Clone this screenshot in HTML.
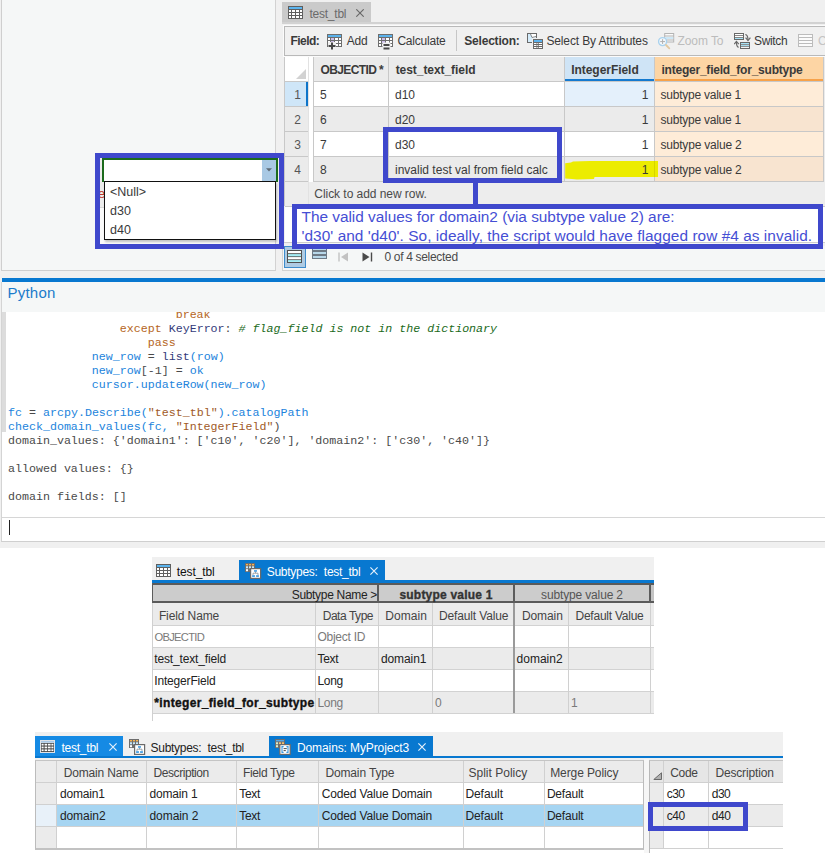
<!DOCTYPE html>
<html>
<head>
<meta charset="utf-8">
<title>ArcGIS Pro domain check</title>
<style>
*{box-sizing:border-box;margin:0;padding:0}
html,body{width:825px;height:853px;overflow:hidden;background:#fff}
body{position:relative;font-family:"Liberation Sans",sans-serif;font-size:12px;color:#333}
.a{position:absolute}
.t{position:absolute;white-space:nowrap;line-height:1}
.b{font-weight:bold}
/* ---------- top: left pane ---------- */
#lp{left:1px;top:0;width:275px;height:271px;background:#f5f7f7;border-left:1px solid #cfcfcf;border-right:1px solid #d2d2d2;border-bottom:1px solid #cfcfcf}
/* ---------- top: table pane ---------- */
#tp{left:276px;top:0;width:549px;height:271px;background:#f0f0f0}

/* table pane pieces */
#tab1{left:282px;top:2px;width:89px;height:20px;background:#cacaca}
#tbar{left:284px;top:26px;width:560px;height:30px;background:#f0f0f0;border:1px solid #b9b9b9;box-shadow:0 0 0 1px #fbfbfb}
#grid{left:284px;top:57px;width:541px;height:149px;background:#fff;border-left:1px solid #c8c8c8}
.hl{position:absolute;height:1px;background:#c8c8c8}
.vl{position:absolute;width:1px;background:#c8c8c8}
.cell{position:absolute}
.g{background:#ebebeb}
.w{background:#fff}
.tx{position:absolute;white-space:nowrap;line-height:14px;height:14px;font-size:12px;color:#3a3a3a}

.ann{position:absolute;border:5px solid #3f48cc}
.anntxt{font-family:"Liberation Sans",sans-serif;font-size:15.4px;line-height:18px;color:#454ed4;white-space:nowrap}
/* python */
#py{left:0;top:0;width:825px;height:548px;background:#f0f0f0}
.code{font-family:"Liberation Mono",monospace;font-size:11.65px;white-space:pre;position:absolute;left:8px;line-height:14px;height:14px}
.k{color:#b5651d}.n{color:#2183dc}.d{color:#333a7a}.c{color:#1a6a1a;font-style:italic}.s{color:#a05a28}.o{color:#4a4a4a}
</style>
</head>
<body>
<div id="py" class="a"></div>
<!-- LEFT PANE -->
<div id="lp" class="a"></div>
<!-- TABLE PANE -->
<div id="tp" class="a"></div>
<div id="tab1" class="a"></div>
<div class="a" style="left:282px;top:22px;width:543px;height:2px;background:#d2d2d2"></div>
<svg class="a" style="left:288px;top:6px" width="15" height="13" viewBox="0 0 15 13"><rect x="0" y="0" width="15" height="13" fill="#5f5f5f"/><rect x="1" y="1" width="13" height="2" fill="#5bb4ee"/><g fill="#fff"><rect x="1" y="4" width="2" height="2"/><rect x="4" y="4" width="3" height="2"/><rect x="8" y="4" width="3" height="2"/><rect x="12" y="4" width="2" height="2"/><rect x="1" y="7" width="2" height="2"/><rect x="4" y="7" width="3" height="2"/><rect x="8" y="7" width="3" height="2"/><rect x="12" y="7" width="2" height="2"/><rect x="1" y="10" width="2" height="2"/><rect x="4" y="10" width="3" height="2"/><rect x="8" y="10" width="3" height="2"/><rect x="12" y="10" width="2" height="2"/></g></svg>
<div class="tx" id="tabtxt" style="left:309.4px;top:7px;font-size:12px;color:#6a6a6a;letter-spacing:-0.225px">test_tbl</div>
<svg class="a" style="left:356px;top:9px" width="8" height="8" viewBox="0 0 8 8"><path d="M0.3 0.3L7.7 7.7M7.7 0.3L0.3 7.7" stroke="#666" stroke-width="1.1" fill="none"/></svg>
<div id="tbar" class="a"></div>
<div class="tx b" id="tb_field" style="left:290.5px;top:34px;letter-spacing:-0.550px">Field:</div>
<div class="tx" id="tb_add" style="left:346.7px;top:34px;letter-spacing:-0.220px">Add</div>
<div class="tx" id="tb_calc" style="left:397.4px;top:34px;letter-spacing:-0.215px">Calculate</div>
<div class="vl" style="left:456px;top:30px;height:21px;background:#c6c6c6"></div>
<div class="tx b" id="tb_sel" style="left:464.2px;top:34px;letter-spacing:-0.186px">Selection:</div>
<div class="tx" id="tb_sba" style="left:546.4px;top:34px;letter-spacing:-0.133px">Select By Attributes</div>
<div class="tx" id="tb_zoom" style="left:677.5px;top:34px;color:#bcbcbc;letter-spacing:-0.081px">Zoom To</div>
<div class="tx" id="tb_sw" style="left:754.0px;top:34px;letter-spacing:-0.341px">Switch</div>
<div class="tx" id="tb_c" style="left:818px;top:34px;color:#c4c4c4">Clear</div>
<svg class="a" style="left:327px;top:34px;overflow:visible" width="15" height="16" viewBox="0 0 15 16"><rect x="0" y="0" width="15" height="13" fill="#6e6e6e"/><rect x="1" y="1" width="13" height="2" fill="#5bb2ec"/><rect x="1" y="4" width="2" height="2" fill="#fff"/><rect x="4" y="4" width="3" height="2" fill="#cdbdea"/><rect x="8" y="4" width="3" height="2" fill="#fff"/><rect x="12" y="4" width="2" height="2" fill="#fff"/><rect x="1" y="7" width="2" height="2" fill="#fff"/><rect x="4" y="7" width="3" height="2" fill="#cdbdea"/><rect x="8" y="7" width="3" height="2" fill="#fff"/><rect x="12" y="7" width="2" height="2" fill="#fff"/><rect x="1" y="10" width="2" height="2" fill="#fff"/><rect x="4" y="10" width="3" height="2" fill="#fff"/><rect x="8" y="10" width="3" height="2" fill="#fff"/><rect x="12" y="10" width="2" height="2" fill="#fff"/><rect x="1" y="8" width="8" height="8" fill="#f0f0f0"/><path d="M5 8.5V15.5M1.5 12H8.5" stroke="#484848" stroke-width="2"/></svg>
<svg class="a" style="left:378px;top:34px;overflow:visible" width="15" height="16" viewBox="0 0 15 16"><rect x="0" y="0" width="15" height="13" fill="#6e6e6e"/><rect x="1" y="1" width="13" height="2" fill="#5bb2ec"/><rect x="1" y="4" width="2" height="2" fill="#fff"/><rect x="4" y="4" width="3" height="2" fill="#cdbdea"/><rect x="8" y="4" width="3" height="2" fill="#fff"/><rect x="12" y="4" width="2" height="2" fill="#fff"/><rect x="1" y="7" width="2" height="2" fill="#fff"/><rect x="4" y="7" width="3" height="2" fill="#cdbdea"/><rect x="8" y="7" width="3" height="2" fill="#fff"/><rect x="12" y="7" width="2" height="2" fill="#fff"/><rect x="1" y="10" width="2" height="2" fill="#fff"/><rect x="4" y="10" width="3" height="2" fill="#fff"/><rect x="8" y="10" width="3" height="2" fill="#fff"/><rect x="12" y="10" width="2" height="2" fill="#fff"/><rect x="4.5" y="8.5" width="8" height="7.5" fill="#f0f0f0"/><path d="M5.5 11H11.5M5.5 14.5H11.5" stroke="#484848" stroke-width="2"/></svg>
<svg class="a" style="left:527px;top:33px" width="17" height="16" viewBox="0 0 17 16"><rect x="0.5" y="0.5" width="9" height="9" fill="#d4ecfb" stroke="#6a6a6a"/><path d="M3.5 1H9V4.2L5.5 5Z" fill="#fff"/><path d="M3.5 1L5 4.5L9 3.5" stroke="#6a6a6a" stroke-width="0.8" fill="none"/><rect x="6" y="6" width="10" height="10" fill="#6a6a6a"/><rect x="5" y="5" width="12" height="1" fill="#f0f0f0"/><rect x="5" y="5" width="1" height="11" fill="#f0f0f0"/><rect x="7" y="7" width="8" height="2" fill="#5bb2ee"/><g fill="#fff"><rect x="7" y="10" width="2.5" height="1"/><rect x="10.3" y="10" width="1" height="1"/><rect x="12" y="10" width="3" height="1"/><rect x="7" y="12" width="2.5" height="1"/><rect x="10.3" y="12" width="1" height="1"/><rect x="12" y="12" width="3" height="1"/><rect x="7" y="14" width="2.5" height="1"/><rect x="10.3" y="14" width="1" height="1"/><rect x="12" y="14" width="3" height="1"/></g></svg>
<svg class="a" style="left:658px;top:33px" width="17" height="17" viewBox="0 0 17 17"><g stroke="#b4b4b4" stroke-width="1" fill="#fafafa"><rect x="6.7" y="0.5" width="9" height="8.5"/></g><path d="M6.7 3H15.7M6.7 7H15.7" stroke="#b4b4b4" stroke-width="1"/><rect x="7.2" y="4" width="8" height="2" fill="#cfe8f6"/><circle cx="4.6" cy="8.6" r="4" fill="#f4f8fb" stroke="#a9d2ee" stroke-width="1.4"/><path d="M2.2 8.6H7M4.6 6.2V11" stroke="#b0b0b0" stroke-width="1"/><path d="M8 12L11.3 15.3" stroke="#e2c9a2" stroke-width="1.8" stroke-linecap="round"/></svg>
<svg class="a" style="left:734px;top:33px" width="17" height="17" viewBox="0 0 17 17"><rect x="0.5" y="0.5" width="9" height="6" fill="#fff" stroke="#686868"/><path d="M0.5 2.5H9.5M0.5 4.5H9.5" stroke="#686868" stroke-width="0.8"/><rect x="1" y="5" width="8" height="1" fill="#a8e4f8"/><rect x="6.5" y="9.5" width="9" height="6" fill="#fff" stroke="#686868"/><rect x="7" y="10" width="8" height="1.2" fill="#a8e4f8"/><rect x="7" y="12" width="8" height="1.2" fill="#a8e4f8"/><path d="M6.5 11.6H15.5M6.5 13.6H15.5" stroke="#686868" stroke-width="0.8"/><path d="M11.3 1.5Q14 2 14 7" stroke="#686868" stroke-width="1.2" fill="none"/><path d="M11.6 4.6L14 7.6L16.4 4.6" stroke="#686868" stroke-width="1.2" fill="none"/><path d="M4.6 14.4Q2.4 13.6 2.4 9" stroke="#686868" stroke-width="1.2" fill="none"/><path d="M0.2 11.2L2.4 8.4L4.8 11.2" stroke="#686868" stroke-width="1.2" fill="none"/></svg>
<svg class="a" style="left:798px;top:34px" width="15" height="13" viewBox="0 0 15 13"><rect x="0.5" y="0.5" width="14" height="12" fill="#fbfbfb" stroke="#bcbcbc"/><path d="M0.5 3.5H14.5M0.5 6.5H14.5M0.5 9.5H14.5" stroke="#bcbcbc"/></svg>
<div id="grid" class="a"></div>
<div class="cell g" style="left:314px;top:57px;width:74px;height:24px"></div>
<div class="cell g" style="left:389px;top:57px;width:175px;height:24px"></div>
<div class="cell" style="left:565px;top:57px;width:89px;height:24px;background:#cfe4f6;border-bottom:2px solid #1479cf"></div>
<div class="cell" style="left:655px;top:57px;width:168px;height:24px;background:#fdd5a4;border-bottom:2px solid #f7a24a"></div>
<svg class="a" style="left:296px;top:69px" width="10" height="10"><path d="M10 0V10H0Z" fill="#d2d2d2"/></svg>
<div class="cell" style="left:285px;top:82px;width:23px;height:24px;background:#cfe6f8"></div>
<div class="cell" style="left:314px;top:82px;width:74px;height:24px;background:#fff"></div>
<div class="cell" style="left:389px;top:82px;width:175px;height:24px;background:#fff"></div>
<div class="cell" style="left:565px;top:82px;width:89px;height:24px;background:#e4f0fb"></div>
<div class="cell" style="left:655px;top:82px;width:168px;height:24px;background:#feecd8"></div>
<div class="cell" style="left:285px;top:107px;width:23px;height:24px;background:#ebebeb"></div>
<div class="cell" style="left:314px;top:107px;width:74px;height:24px;background:#ebebeb"></div>
<div class="cell" style="left:389px;top:107px;width:175px;height:24px;background:#ebebeb"></div>
<div class="cell" style="left:565px;top:107px;width:89px;height:24px;background:#ebebeb"></div>
<div class="cell" style="left:655px;top:107px;width:168px;height:24px;background:#f8e4d0"></div>
<div class="cell" style="left:285px;top:132px;width:23px;height:24px;background:#ebebeb"></div>
<div class="cell" style="left:314px;top:132px;width:74px;height:24px;background:#fff"></div>
<div class="cell" style="left:389px;top:132px;width:175px;height:24px;background:#fff"></div>
<div class="cell" style="left:565px;top:132px;width:89px;height:24px;background:#fff"></div>
<div class="cell" style="left:655px;top:132px;width:168px;height:24px;background:#feecd8"></div>
<div class="cell" style="left:285px;top:157px;width:23px;height:24px;background:#ebebeb"></div>
<div class="cell" style="left:314px;top:157px;width:74px;height:24px;background:#ebebeb"></div>
<div class="cell" style="left:389px;top:157px;width:175px;height:24px;background:#ebebeb"></div>
<div class="cell" style="left:565px;top:157px;width:89px;height:24px;background:#ebebeb"></div>
<div class="cell" style="left:655px;top:157px;width:168px;height:24px;background:#f8e4d0"></div>
<div class="cell" style="left:306px;top:82px;width:2px;height:24px;background:#0f75c9"></div>
<div class="cell g" style="left:285px;top:182px;width:540px;height:24px;background:#ededed"></div>
<div class="hl" style="left:285px;top:81px;width:24px"></div>
<div class="hl" style="left:313px;top:81px;width:511px"></div>
<div class="hl" style="left:285px;top:106px;width:24px"></div>
<div class="hl" style="left:313px;top:106px;width:511px"></div>
<div class="hl" style="left:285px;top:131px;width:24px"></div>
<div class="hl" style="left:313px;top:131px;width:511px"></div>
<div class="hl" style="left:285px;top:156px;width:24px"></div>
<div class="hl" style="left:313px;top:156px;width:511px"></div>
<div class="hl" style="left:285px;top:181px;width:24px"></div>
<div class="hl" style="left:313px;top:181px;width:511px"></div>
<div class="hl" style="left:285px;top:206px;width:540px"></div>
<div class="vl" style="left:313px;top:57px;height:125px"></div>
<div class="vl" style="left:388px;top:57px;height:125px"></div>
<div class="vl" style="left:564px;top:57px;height:125px"></div>
<div class="vl" style="left:654px;top:57px;height:125px"></div>
<div class="vl" style="left:823px;top:57px;height:125px"></div>
<div class="vl" style="left:308px;top:57px;height:149px;background:#e2e2e2"></div>
<div class="cell g" style="left:824px;top:57px;width:1px;height:125px"></div>
<div class="tx b" id="h_oid" style="left:320.4px;top:63px;letter-spacing:-0.599px">OBJECTID *</div>
<div class="tx b" id="h_ttf" style="left:395.7px;top:63px;letter-spacing:-0.060px">test_text_field</div>
<div class="tx b" id="h_if" style="left:571.2px;top:63px;letter-spacing:-0.043px">IntegerField</div>
<div class="tx b" id="h_ifs" style="left:661.5px;top:63px;letter-spacing:-0.228px">integer_field_for_subtype</div>
<div class="tx" style="left:285px;width:16px;text-align:right;top:88px;color:#555">1</div>
<div class="tx" style="left:320px;top:88px">5</div>
<div class="tx" id="r0t" style="left:395px;top:88px">d10</div>
<div class="tx" style="left:565px;width:83.5px;text-align:right;top:88px">1</div>
<div class="tx" id="r0s" style="left:660.5px;top:88px;letter-spacing:-0.237px">subtype value 1</div>
<div class="tx" style="left:285px;width:16px;text-align:right;top:113px;color:#555">2</div>
<div class="tx" style="left:320px;top:113px">6</div>
<div class="tx" id="r1t" style="left:395px;top:113px">d20</div>
<div class="tx" style="left:565px;width:83.5px;text-align:right;top:113px">1</div>
<div class="tx" id="r1s" style="left:660.5px;top:113px;letter-spacing:-0.237px">subtype value 1</div>
<div class="tx" style="left:285px;width:16px;text-align:right;top:138px;color:#555">3</div>
<div class="tx" style="left:320px;top:138px">7</div>
<div class="tx" id="r2t" style="left:395px;top:138px">d30</div>
<div class="tx" style="left:565px;width:83.5px;text-align:right;top:138px">1</div>
<div class="tx" id="r2s" style="left:660.5px;top:138px;letter-spacing:-0.204px">subtype value 2</div>
<div class="tx" style="left:285px;width:16px;text-align:right;top:163px;color:#555">4</div>
<div class="tx" style="left:320px;top:163px">8</div>
<div class="tx" id="r3t" style="left:395.0px;top:163px;letter-spacing:0.002px">invalid test val from field calc</div>
<div class="tx" style="left:565px;width:83.5px;text-align:right;top:163px">1</div>
<div class="tx" id="r3s" style="left:660.5px;top:163px;letter-spacing:-0.204px">subtype value 2</div>
<div class="tx" id="addrow" style="left:314.3px;top:187px;color:#4a4a4a;letter-spacing:-0.047px">Click to add new row.</div>
<div class="a" style="left:282px;top:246px;width:543px;height:25px;background:#f5f7f7;border-left:1px solid #d2d2d2;border-bottom:1px solid #d2d2d2"></div><div class="a" style="left:284px;top:246px;width:22px;height:22px;background:#aecbe3;border:1px solid #3d8bcb"></div>
<svg class="a" style="left:287px;top:250px" width="15" height="13" viewBox="0 0 15 13"><rect x="0" y="0" width="15" height="13" fill="#505050"/><rect x="1" y="1" width="13" height="2.2" fill="#fff"/><rect x="1" y="4.1" width="13" height="2.2" fill="#a6eef6"/><rect x="1" y="7.1" width="13" height="2.2" fill="#fff"/><rect x="1" y="10.1" width="13" height="1.9" fill="#a6eef6"/></svg>
<svg class="a" style="left:312px;top:248px" width="15" height="11" viewBox="0 0 15 11"><g fill="#b8d8ea" stroke="#6e7a86" stroke-width="1"><rect x="0.5" y="-1.5" width="14" height="4"/><rect x="0.5" y="3.5" width="14" height="3"/><rect x="0.5" y="7.5" width="14" height="3"/></g></svg>
<svg class="a" style="left:338px;top:252px" width="11" height="10" viewBox="0 0 11 10"><path d="M1 0.5V9.5" stroke="#c2c2c2" stroke-width="1.4"/><path d="M10 0.5V9.5L3 5Z" fill="#c2c2c2"/></svg>
<svg class="a" style="left:362px;top:252px" width="11" height="10" viewBox="0 0 11 10"><path d="M9.5 0.5V9.5" stroke="#4a4a4a" stroke-width="1.4"/><path d="M0.5 0.5V9.5L7.5 5Z" fill="#4a4a4a"/></svg>
<div class="tx" id="sel0" style="left:384.4px;top:250px;color:#4a4a4a;letter-spacing:-0.311px">0 of 4 selected</div>

<svg class="a" style="left:564px;top:158px" width="96" height="24" viewBox="564 158 96 24"><path d="M565.2 163.2L571 162.4L573 161.6L581 161.2L590 160.9H658V177H594.5L594 179L577 179.4L572 179L565.2 178.6Z" fill="#ecec00"/><rect x="654" y="161" width="1" height="16" fill="#d8d400"/></svg>
<div class="tx" style="left:565px;width:83.5px;text-align:right;top:163px">1</div>
<div class="ann" style="left:383px;top:127px;width:179px;height:56px"></div>
<div class="a" style="left:473px;top:181px;width:5px;height:24px;background:#3f48cc"></div>
<div class="a" style="left:285px;top:207px;width:540px;height:35px;background:#fff"></div><div class="a" style="left:284px;top:242px;width:541px;height:1px;background:#cdcdcd"></div><div class="a" style="left:292px;top:204px;width:531px;height:38px;background:#fff"></div><div class="a" style="left:297px;top:242px;width:528px;height:1px;background:#cdcdcd"></div><div class="a" style="left:297px;top:243px;width:521px;height:1px;background:#f5f7f7"></div><div class="a" style="left:823px;top:207px;width:2px;height:35px;background:#fff"></div><div class="ann" style="left:292px;top:204px;width:531px;height:45px"></div>
<div class="a anntxt" style="left:301.5px;top:208px"><span id="ann1" style="letter-spacing:-0.014px">The valid values for domain2 (via subtype value 2) are:</span></div>
<div class="a anntxt" style="left:301.5px;top:226.5px"><span id="ann2" style="letter-spacing:0.049px">'d30' and 'd40'. So, ideally, the script would have flagged row #4 as invalid.</span></div>
<div class="a" style="left:100px;top:158px;width:180px;height:49px;background:#ececec"></div>
<div class="a" style="left:100px;top:207px;width:180px;height:1px;background:#d8d8d8"></div>
<div class="a" style="left:100px;top:208px;width:180px;height:38px;background:#fafafa"></div>
<div class="tx" style="left:98px;top:187px;color:#c0392b;font-size:13px">e</div>
<div class="a" style="left:275px;top:158px;width:1px;height:88px;background:#d2d2d2"></div>
<div class="a" style="left:276px;top:158px;width:4px;height:88px;background:#f0f0f0"></div>
<div class="a" style="left:102px;top:158px;width:176px;height:24px;background:#fff;border:2px solid #1c6b1c;border-bottom:none"></div>
<div class="a" style="left:262px;top:160px;width:14px;height:21px;background:#a9c9e4"></div>
<svg class="a" style="left:266px;top:168px" width="6" height="4"><path d="M0 0.3H6L3 3.6Z" fill="#5f6b76"/></svg>
<div class="a" style="left:104px;top:181px;width:172px;height:59px;background:#fff;border:1px solid #111;box-shadow:1px 2px 2px rgba(0,0,0,.22)"></div>
<div class="tx" id="dd0" style="left:110px;top:185px;font-size:12.5px">&lt;Null&gt;</div>
<div class="tx" id="dd1" style="left:110px;top:204px;font-size:12.5px">d30</div>
<div class="tx" id="dd2" style="left:110px;top:223px;font-size:12.5px">d40</div>
<div class="ann" style="left:95px;top:153px;width:189px;height:96px"></div>
<!-- PYTHON -->
<div class="a" style="left:2px;top:278px;width:823px;height:4px;background:#0878d0"></div>
<div class="a" style="left:1px;top:282px;width:824px;height:260px;background:#fff;border-left:1px solid #d4d4d4;border-bottom:1px solid #cfcfcf"></div>
<div class="a" style="left:2px;top:282px;width:823px;height:30px;background:#f5f7f7"></div>
<div class="tx" id="pytitle" style="left:7.5px;top:284px;font-size:15px;line-height:18px;height:18px;color:#1b7bcb;letter-spacing:0.216px">Python</div>
<div class="a" style="left:2px;top:312px;width:4px;height:120px;background:#dcdcdc"></div>
<div class="a" style="left:2px;top:517px;width:823px;height:1px;background:#d6d6d6"></div>
<div class="a" style="left:9px;top:520px;width:1px;height:15px;background:#222"></div>
<div class="a" id="codewrap" style="left:0;top:312px;width:825px;height:205px;overflow:hidden">
<div class="code" style="top:-4.5px">                        <span class="k">break</span></div>
<div class="code" style="top:9.5px">                <span class="k">except</span> <span class="d">KeyError</span><span class="o">:</span> <span class="c"># flag_field is not in the dictionary</span></div>
<div class="code" style="top:23.5px">                    <span class="k">pass</span></div>
<div class="code" style="top:37.5px">            <span class="n">new_row</span> <span class="o">=</span> <span class="d">list</span><span class="n">(row)</span></div>
<div class="code" style="top:51.5px">            <span class="n">new_row</span><span class="o">[-1]</span> <span class="o">=</span> <span class="n">ok</span></div>
<div class="code" style="top:65.5px">            <span class="n">cursor.updateRow(new_row)</span></div>
<div class="code" style="top:93.5px"><span class="n">fc</span> <span class="o">=</span> <span class="n">arcpy.Describe(</span><span class="s">"test_tbl"</span><span class="n">).catalogPath</span></div>
<div class="code" style="top:107.5px"><span class="n">check_domain_values(fc,</span> <span class="s">"IntegerField"</span><span class="o">)</span></div>
<div class="code" style="top:121.5px"><span class="o">domain_values: {'domain1': ['c10', 'c20'], 'domain2': ['c30', 'c40']}</span></div>
<div class="code" style="top:149.5px"><span class="o">allowed values: {}</span></div>
<div class="code" style="top:177.5px"><span class="o">domain fields: []</span></div>
</div>
<!-- SUBTYPES -->
<div class="a" style="left:152px;top:557px;width:502px;height:24px;background:#f0f0f0"></div>
<div class="a" style="left:239px;top:560px;width:146px;height:21px;background:#0878d0"></div>
<div class="a" style="left:152px;top:580px;width:502px;height:3px;background:#0878d0"></div>
<svg class="a" style="left:156px;top:564px" width="15" height="13" viewBox="0 0 15 13"><rect x="0" y="0" width="15" height="13" fill="#5f5f5f"/><rect x="1" y="1" width="13" height="2" fill="#5bb4ee"/><g fill="#fff"><rect x="1" y="4" width="2" height="2"/><rect x="4" y="4" width="3" height="2"/><rect x="8" y="4" width="3" height="2"/><rect x="12" y="4" width="2" height="2"/><rect x="1" y="7" width="2" height="2"/><rect x="4" y="7" width="3" height="2"/><rect x="8" y="7" width="3" height="2"/><rect x="12" y="7" width="2" height="2"/><rect x="1" y="10" width="2" height="2"/><rect x="4" y="10" width="3" height="2"/><rect x="8" y="10" width="3" height="2"/><rect x="12" y="10" width="2" height="2"/></g></svg>
<div class="tx" id="st_t1" style="left:176.8px;top:565px;color:#111;letter-spacing:-0.125px">test_tbl</div>
<svg class="a" style="left:245px;top:563px" width="17" height="16" viewBox="0 0 17 16"><rect x="0" y="0" width="10" height="9" fill="#6e6e6e"/><g fill="#f8b24e"><rect x="1" y="1" width="2" height="1.4"/><rect x="4" y="1" width="2" height="1.4"/><rect x="7" y="1" width="2" height="1.4"/></g><g fill="#c8e8fc"><rect x="1" y="3.3" width="2" height="2"/><rect x="4" y="3.3" width="2" height="2"/><rect x="7" y="3.3" width="2" height="2"/></g><rect x="1" y="6.2" width="2" height="2" fill="#fff"/><rect x="4.3" y="4.4" width="12.4" height="11.6" fill="#f4f4f4" opacity="0"/><rect x="5.6" y="5.6" width="10" height="9.8" fill="#fff" stroke="#6a6a6a" stroke-width="1.2"/><path d="M10.5 8.5V10.2M8 12V10.2H13V12" stroke="#7a8288" stroke-width="0.7" fill="none"/><rect x="9" y="7.2" width="3" height="1.5" fill="#3a98e0"/><rect x="7.1" y="12.2" width="2.8" height="1.7" fill="#3a98e0"/><rect x="11.1" y="12.2" width="2.8" height="1.7" fill="#3a98e0"/></svg>
<div class="tx" id="st_t2" style="left:266.7px;top:565px;color:#fff;letter-spacing:-0.265px">Subtypes:&nbsp; test_tbl</div>
<svg class="a" style="left:370px;top:567px" width="8" height="8" viewBox="0 0 8 8"><path d="M0.4 0.4L7.6 7.6M7.6 0.4L0.4 7.6" stroke="#e6f1fb" stroke-width="1.15" fill="none"/></svg>
<div class="a" style="left:152px;top:583px;width:502px;height:20px;background:#cccccc;border-top:2px solid #5a5a5a;border-bottom:2px solid #5a5a5a"></div>
<div class="a" style="left:152px;top:583px;width:1px;height:20px;background:#5c5c5c"></div>
<div class="a" style="left:377px;top:583px;width:2px;height:20px;background:#5c5c5c"></div>
<div class="a" style="left:513px;top:583px;width:2px;height:20px;background:#5c5c5c"></div>
<div class="a" style="left:649px;top:583px;width:2px;height:20px;background:#5c5c5c"></div>
<div class="a" style="left:651px;top:585px;width:3px;height:16px;background:#c4c4c4"></div>
<div class="tx" id="st_sn" style="left:252px;width:125px;text-align:right;top:588px;color:#222;letter-spacing:-0.316px">Subtype Name &gt;</div>
<div class="tx b" id="st_v1" style="-webkit-text-stroke:0.35px #333;left:379px;width:134px;text-align:center;top:588px;color:#333;letter-spacing:0.204px">subtype value 1</div>
<div class="tx" id="st_v2" style="left:515px;width:134px;text-align:center;top:588px;color:#555;letter-spacing:-0.151px">subtype value 2</div>
<div class="a" style="left:152px;top:603px;width:502px;height:22px;background:#ebebeb"></div>
<div class="a" style="left:152px;top:626px;width:502px;height:21px;background:#fff"></div>
<div class="a" style="left:152px;top:648px;width:502px;height:21px;background:#ebebeb"></div>
<div class="a" style="left:152px;top:670px;width:502px;height:21px;background:#fff"></div>
<div class="a" style="left:152px;top:692px;width:502px;height:21px;background:#ebebeb"></div>
<div class="hl" style="left:152px;top:625px;width:502px;background:#d2d2d2"></div>
<div class="hl" style="left:152px;top:647px;width:502px;background:#d2d2d2"></div>
<div class="hl" style="left:152px;top:669px;width:502px;background:#d2d2d2"></div>
<div class="hl" style="left:152px;top:691px;width:502px;background:#d2d2d2"></div>
<div class="hl" style="left:152px;top:713px;width:502px;background:#d2d2d2"></div>
<div class="vl" style="left:315px;top:603px;height:110px;background:#d0d0d0"></div>
<div class="vl" style="left:378px;top:603px;height:110px;background:#d0d0d0"></div>
<div class="vl" style="left:432px;top:603px;height:110px;background:#d0d0d0"></div>
<div class="vl" style="left:568px;top:603px;height:110px;background:#d0d0d0"></div>
<div class="a" style="left:513px;top:603px;width:2px;height:110px;background:#9a9a9a"></div>
<div class="vl" style="left:650px;top:603px;height:110px;background:#d0d0d0"></div>
<div class="vl" style="left:152px;top:603px;height:118px;background:#d0d0d0"></div>
<div class="tx" id="sh1" style="left:158.9px;top:609px;color:#444;letter-spacing:-0.106px">Field Name</div>
<div class="tx" id="sh2" style="left:322.7px;top:609px;color:#444;letter-spacing:-0.454px">Data Type</div>
<div class="tx" id="sh3" style="left:385.3px;top:609px;color:#444;letter-spacing:0.073px">Domain</div>
<div class="tx" id="sh4" style="left:439.1px;top:609px;color:#444;letter-spacing:-0.158px">Default Value</div>
<div class="tx" id="sh5" style="left:522.0px;top:609px;color:#444;letter-spacing:-0.110px">Domain</div>
<div class="tx" id="sh6" style="left:575.5px;top:609px;color:#444;letter-spacing:-0.243px">Default Value</div>
<div class="tx" id="sr1a" style="font-size:11.2px;left:154.5px;top:630px;color:#7a7a7a;letter-spacing:-0.729px">OBJECTID</div>
<div class="tx" id="sr1b" style="left:317.5px;top:630px;color:#7a7a7a;letter-spacing:-0.268px">Object ID</div>
<div class="tx" id="sr2a" style="left:154.3px;top:652px;color:#222;letter-spacing:-0.156px">test_text_field</div>
<div class="tx" id="sr2b" style="left:317.5px;top:652px;color:#222;letter-spacing:-0.329px">Text</div>
<div class="tx" id="sr2c" style="left:380.9px;top:652px;color:#222;letter-spacing:-0.076px">domain1</div>
<div class="tx" id="sr2d" style="left:516.5px;top:652px;color:#222;letter-spacing:0.024px">domain2</div>
<div class="tx" id="sr3a" style="left:154.3px;top:674px;color:#222;letter-spacing:-0.181px">IntegerField</div>
<div class="tx" id="sr3b" style="left:317.5px;top:674px;color:#222;letter-spacing:-0.351px">Long</div>
<div class="tx" id="sr4a" style="left:154.3px;top:696px;color:#111;font-weight:bold;-webkit-text-stroke:0.35px #111;letter-spacing:0.336px">*integer_field_for_subtype</div>
<div class="tx" id="sr4b" style="left:317.5px;top:696px;color:#7a7a7a;letter-spacing:-0.351px">Long</div>
<div class="tx" id="sr4c" style="left:435px;top:696px;color:#7a7a7a">0</div>
<div class="tx" id="sr4d" style="left:571px;top:696px;color:#7a7a7a">1</div>
<!-- DOMAINS -->
<div class="a" style="left:35px;top:732px;width:748px;height:28px;background:#f0f0f0"></div>
<div class="a" style="left:35px;top:736px;width:88px;height:20px;background:#158ae4"></div>
<div class="a" style="left:269px;top:736px;width:164px;height:20px;background:#0878d0"></div>
<div class="a" style="left:35px;top:756px;width:748px;height:2px;background:#0878d0"></div>
<svg class="a" style="left:40px;top:740px" width="15" height="13" viewBox="0 0 15 13"><rect x="0" y="0" width="15" height="13" fill="#dfe3e8"/><rect x="1" y="1" width="13" height="1.6" fill="#a9c8e6"/><rect x="1" y="3" width="13" height="9" fill="#4c4c4c"/><g fill="#fff"><rect x="1.6" y="3.8" width="2" height="1.7"/><rect x="4.6" y="3.8" width="2.6" height="1.7"/><rect x="8" y="3.8" width="2.6" height="1.7"/><rect x="11.4" y="3.8" width="2" height="1.7"/><rect x="1.6" y="6.6" width="2" height="1.7"/><rect x="4.6" y="6.6" width="2.6" height="1.7"/><rect x="8" y="6.6" width="2.6" height="1.7"/><rect x="11.4" y="6.6" width="2" height="1.7"/><rect x="1.6" y="9.4" width="2" height="1.7"/><rect x="4.6" y="9.4" width="2.6" height="1.7"/><rect x="8" y="9.4" width="2.6" height="1.7"/><rect x="11.4" y="9.4" width="2" height="1.7"/></g></svg>
<div class="tx" id="dm_t1" style="left:61.4px;top:741px;color:#fff;letter-spacing:-0.225px">test_tbl</div>
<svg class="a" style="left:108.5px;top:743px" width="8" height="8" viewBox="0 0 8 8"><path d="M0.4 0.4L7.6 7.6M7.6 0.4L0.4 7.6" stroke="#e6f1fb" stroke-width="1.15" fill="none"/></svg>
<svg class="a" style="left:129px;top:739px" width="17" height="16" viewBox="0 0 17 16"><rect x="0" y="0" width="10" height="9" fill="#6e6e6e"/><g fill="#f8b24e"><rect x="1" y="1" width="2" height="1.4"/><rect x="4" y="1" width="2" height="1.4"/><rect x="7" y="1" width="2" height="1.4"/></g><g fill="#c8e8fc"><rect x="1" y="3.3" width="2" height="2"/><rect x="4" y="3.3" width="2" height="2"/><rect x="7" y="3.3" width="2" height="2"/></g><rect x="1" y="6.2" width="2" height="2" fill="#fff"/><rect x="4.3" y="4.4" width="12.4" height="11.6" fill="#f4f4f4" opacity="0"/><rect x="5.6" y="5.6" width="10" height="9.8" fill="#fff" stroke="#6a6a6a" stroke-width="1.2"/><path d="M10.5 8.5V10.2M8 12V10.2H13V12" stroke="#7a8288" stroke-width="0.7" fill="none"/><rect x="9" y="7.2" width="3" height="1.5" fill="#3a98e0"/><rect x="7.1" y="12.2" width="2.8" height="1.7" fill="#3a98e0"/><rect x="11.1" y="12.2" width="2.8" height="1.7" fill="#3a98e0"/></svg>
<div class="tx" id="dm_t2" style="left:150.5px;top:741px;color:#222;letter-spacing:-0.275px">Subtypes:&nbsp; test_tbl</div>
<svg class="a" style="left:275px;top:739px" width="17" height="16" viewBox="0 0 17 16"><rect x="0" y="0" width="10" height="9" fill="#6e6e6e"/><rect x="1" y="1" width="8" height="1.4" fill="#58a8e8"/><rect x="1" y="3.3" width="2" height="2" fill="#d8f0d0"/><rect x="4" y="3.3" width="2" height="2" fill="#f8c070"/><rect x="7" y="3.3" width="2" height="2" fill="#f8c070"/><rect x="1" y="6.2" width="2" height="2" fill="#d8f0d0"/><rect x="4.8" y="5.6" width="10.4" height="9.8" fill="#fff" stroke="#6a6a6a" stroke-width="1.2"/><path d="M8.6 7.6H7V13.4H8.6M11.4 7.6H13V13.4H11.4" stroke="#3a98e0" stroke-width="1.1" fill="none"/><path d="M8.6 9.6H11.8M8.6 11.6H10.8" stroke="#4a4a4a" stroke-width="1"/></svg>
<div class="tx" id="dm_t3" style="left:297.0px;top:741px;color:#fff;letter-spacing:-0.108px">Domains: MyProject3</div>
<svg class="a" style="left:418px;top:743px" width="8" height="8" viewBox="0 0 8 8"><path d="M0.4 0.4L7.6 7.6M7.6 0.4L0.4 7.6" stroke="#e6f1fb" stroke-width="1.15" fill="none"/></svg>
<div class="a" style="left:35px;top:760px;width:609px;height:90px;background:#fff;border:1px solid #bcbcbc;border-top-color:#c4c4c4;border-bottom:2px solid #c2c2c2"></div><div class="a" style="left:644px;top:759px;width:5px;height:94px;background:#f6f6f6"></div>
<div class="a" style="left:36px;top:761px;width:607px;height:21px;background:#ebebeb"></div>
<div class="a" style="left:36px;top:783px;width:20px;height:21px;background:#ebebeb"></div>
<div class="a" style="left:36px;top:805px;width:607px;height:21px;background:#a6d5f2"></div>
<div class="a" style="left:36px;top:804px;width:21px;height:23px;background:#e8f1f9;border:1px solid #1c6cbc;border-left:none"></div>
<div class="a" style="left:36px;top:827px;width:20px;height:21px;background:#ebebeb"></div>
<div class="hl" style="left:36px;top:782px;width:607px;background:#d0d0d0"></div>
<div class="hl" style="left:36px;top:804px;width:607px;background:#d0d0d0"></div>
<div class="hl" style="left:36px;top:826px;width:607px;background:#d0d0d0"></div>
<div class="vl" style="left:56px;top:761px;height:87px;background:#d0d0d0"></div>
<div class="vl" style="left:146px;top:761px;height:87px;background:#d0d0d0"></div>
<div class="vl" style="left:236px;top:761px;height:87px;background:#d0d0d0"></div>
<div class="vl" style="left:318px;top:761px;height:87px;background:#d0d0d0"></div>
<div class="vl" style="left:463px;top:761px;height:87px;background:#d0d0d0"></div>
<div class="vl" style="left:544px;top:761px;height:87px;background:#d0d0d0"></div>
<div class="tx" id="dh1" style="left:63.8px;top:766px;color:#444;letter-spacing:-0.182px">Domain Name</div>
<div class="tx" id="dh2" style="left:153.6px;top:766px;color:#444;letter-spacing:-0.448px">Description</div>
<div class="tx" id="dh3" style="left:243.0px;top:766px;color:#444;letter-spacing:-0.356px">Field Type</div>
<div class="tx" id="dh4" style="left:325.4px;top:766px;color:#444;letter-spacing:-0.135px">Domain Type</div>
<div class="tx" id="dh5" style="left:468.5px;top:766px;color:#444;letter-spacing:0.009px">Split Policy</div>
<div class="tx" id="dh6" style="left:550.2px;top:766px;color:#444;letter-spacing:-0.097px">Merge Policy</div>
<div class="tx" id="d0a" style="left:59.9px;top:787px;color:#222;letter-spacing:-0.176px">domain1</div>
<div class="tx" id="d0b" style="left:149.5px;top:787px;color:#222;letter-spacing:-0.172px">domain 1</div>
<div class="tx" id="d0c" style="left:239.3px;top:787px;color:#222;letter-spacing:-0.354px">Text</div>
<div class="tx" id="d0d" style="left:321.8px;top:787px;color:#222;letter-spacing:-0.166px">Coded Value Domain</div>
<div class="tx" id="d0e" style="left:465.4px;top:787px;color:#222;letter-spacing:-0.062px">Default</div>
<div class="tx" id="d0f" style="left:546.9px;top:787px;color:#222;letter-spacing:-0.204px">Default</div>
<div class="tx" id="d1a" style="left:59.9px;top:809px;color:#222;letter-spacing:-0.062px">domain2</div>
<div class="tx" id="d1b" style="left:149.5px;top:809px;color:#222;letter-spacing:-0.072px">domain 2</div>
<div class="tx" id="d1c" style="left:239.3px;top:809px;color:#222;letter-spacing:-0.354px">Text</div>
<div class="tx" id="d1d" style="left:321.8px;top:809px;color:#222;letter-spacing:-0.166px">Coded Value Domain</div>
<div class="tx" id="d1e" style="left:465.4px;top:809px;color:#222;letter-spacing:-0.062px">Default</div>
<div class="tx" id="d1f" style="left:546.9px;top:809px;color:#222;letter-spacing:-0.204px">Default</div>
<div class="a" style="left:649px;top:760px;width:134px;height:93px;background:#fff;border-left:1px solid #b8b8b8;border-top:1px solid #c4c4c4"></div>
<div class="a" style="left:650px;top:761px;width:133px;height:21px;background:#e6e6e6"></div>
<div class="a" style="left:650px;top:783px;width:13px;height:65px;background:#ebebeb"></div>
<div class="a" style="left:650px;top:805px;width:133px;height:21px;background:#ebebeb"></div>
<div class="hl" style="left:650px;top:782px;width:133px;background:#d0d0d0"></div>
<div class="hl" style="left:650px;top:804px;width:133px;background:#d0d0d0"></div>
<div class="hl" style="left:650px;top:826px;width:133px;background:#d0d0d0"></div>
<div class="hl" style="left:650px;top:848px;width:133px;background:#d0d0d0"></div>
<div class="vl" style="left:663px;top:761px;height:87px;background:#d0d0d0"></div>
<div class="vl" style="left:708px;top:761px;height:87px;background:#d0d0d0"></div>
<svg class="a" style="left:653px;top:772px" width="9" height="8"><path d="M8.5 0.8V7.5H0.8Z" fill="#b0b0b0" stroke="#6a6a6a" stroke-width="1"/></svg>
<div class="tx" id="ch1" style="left:670.3px;top:766px;color:#444;letter-spacing:-0.372px">Code</div>
<div class="tx" id="ch2" style="left:715.4px;top:766px;color:#444;letter-spacing:-0.157px">Description</div>
<div class="tx" id="c1a" style="left:666.8px;top:787px;color:#222;letter-spacing:-0.553px">c30</div>
<div class="tx" id="c1b" style="left:711.8px;top:787px;color:#222;letter-spacing:-0.510px">d30</div>
<div class="tx" id="c2a" style="left:666.8px;top:809px;color:#222;letter-spacing:-0.453px">c40</div>
<div class="tx" id="c2b" style="left:711.8px;top:809px;color:#222;letter-spacing:-0.410px">d40</div>
<div class="ann" style="left:648px;top:802px;width:100px;height:29px"></div>
</body>
</html>
